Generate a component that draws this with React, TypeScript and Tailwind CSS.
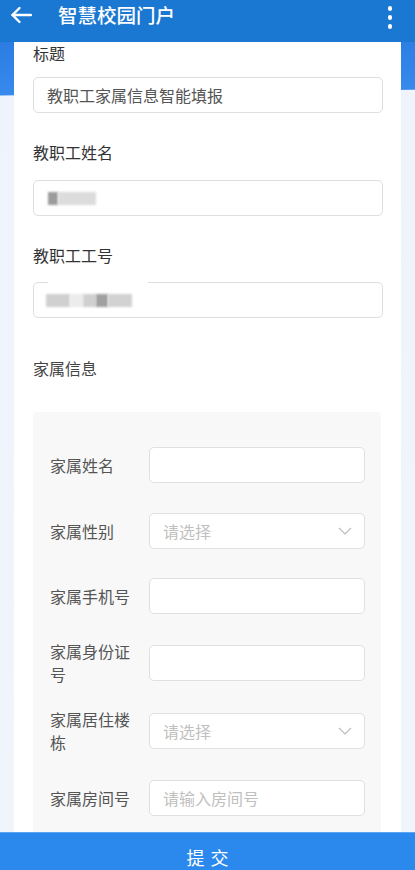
import React from "react";

const font = "font-['Noto_Sans_CJK_SC','Noto_Sans',sans-serif]";

function Chevron() {
  return (
    <svg width="14" height="8" viewBox="0 0 14 8" fill="none">
      <polyline points="1,1 7,7 13,1" stroke="#bdbdbd" strokeWidth="1.2" fill="none" />
    </svg>
  );
}

type Row = {
  label: string;
  mt: string;
  kind: "input" | "select";
  placeholder?: string;
};

const rows: Row[] = [
  { label: "家属姓名", mt: "mt-0", kind: "input" },
  { label: "家属性别", mt: "mt-[30px]", kind: "select", placeholder: "请选择" },
  { label: "家属手机号", mt: "mt-[29px]", kind: "input" },
  { label: "家属身份证号", mt: "mt-[31px]", kind: "input" },
  { label: "家属居住楼栋", mt: "mt-[32px]", kind: "select", placeholder: "请选择" },
  { label: "家属房间号", mt: "mt-[31px]", kind: "input", placeholder: "请输入房间号" },
];

export default function App() {
  return (
    <div className={`w-[415px] h-[870px] overflow-hidden flex flex-col ${font}`}>
      {/* Header */}
      <div className="h-[42px] shrink-0 bg-[#1a77d2] flex items-start pt-[5px]">
        <div className="ml-[10px] mt-[1px]">
          <svg width="22" height="18" viewBox="0 0 22 18" fill="none">
            <line x1="2.5" y1="9" x2="21" y2="9" stroke="white" strokeWidth="2.4" strokeLinecap="round" />
            <polyline points="9.5,2 2.5,9 9.5,16" stroke="white" strokeWidth="2.4" strokeLinecap="round" strokeLinejoin="round" fill="none" />
          </svg>
        </div>
        <div className="ml-[26px] text-white text-[19.5px] leading-[19px] font-medium">智慧校园门户</div>
        <div className="ml-auto mr-[23px] flex flex-col gap-[4.5px] pt-[1px]">
          <div className="w-[4.5px] h-[4.5px] rounded-full bg-white" />
          <div className="w-[4.5px] h-[4.5px] rounded-full bg-white" />
          <div className="w-[4.5px] h-[4.5px] rounded-full bg-white" />
        </div>
      </div>

      {/* Main */}
      <div className="flex-1 min-h-0 overflow-hidden px-[14px] bg-[linear-gradient(179.2deg,#2b7de3_0px,#3889ec_53px,#eff3fb_54px,#f0f4fb_100%)]">
        <div className="h-full bg-white pl-[19px] pr-[18px]">
          <div className="text-[16px] leading-[23px] text-[#333]">标题</div>
          <div className="mt-[12px] h-[36px] rounded-[5px] border border-[#dedede] flex items-center pl-[13px] text-[16px] text-[#555]">
            教职工家属信息智能填报
          </div>

          <div className="mt-[27px] text-[16px] leading-[24px] text-[#333]">教职工姓名</div>
          <div className="mt-[16px] h-[36px] rounded-[5px] border border-[#dedede] flex items-center pl-[14px]">
            <div className="w-[10px] h-[13px] bg-[#9c9c9c] blur-[1px]" />
            <div className="w-[38px] h-[13px] bg-[#dcdcdc] blur-[1px]" />
          </div>

          <div className="mt-[27px] text-[16px] leading-[24px] text-[#333]">教职工工号</div>
          <div className="mt-[15px] h-[36px] rounded-[5px] border border-[#dedede] flex items-center pl-[12px] relative">
            <div className="absolute left-[14px] top-[-2px] w-[100px] h-[4px] bg-white" />
            <div className="w-[24px] h-[13px] bg-[#d0d0d0] blur-[1px]" />
            <div className="w-[13px] h-[13px] bg-[#ececec] blur-[1px]" />
            <div className="w-[13px] h-[13px] bg-[#d0d0d0] blur-[1px]" />
            <div className="w-[12px] h-[13px] bg-[#a0a0a0] blur-[1px]" />
            <div className="w-[24px] h-[13px] bg-[#d2d2d2] blur-[1px]" />
          </div>

          <div className="mt-[38px] text-[16px] leading-[24px] text-[#444]">家属信息</div>

          <div className="mt-[32px] mr-[2px] bg-[#f8f8f8] rounded-[4px] pt-[35px] pl-[17px] pr-[16px] pb-[30px]">
            {rows.map((r) => (
              <div key={r.label} className={`${r.mt} h-[36px] flex items-center`}>
                <div className="w-[88px] shrink-0 text-[16px] leading-[23px] text-[#555]">{r.label}</div>
                <div className="ml-[11px] flex-1 h-[36px] rounded-[5px] border border-[#e0e0e0] bg-white flex items-center pl-[13px] pr-[12px]">
                  <span className="text-[16px] text-[#c0c0c0]">{r.placeholder ?? ""}</span>
                  {r.kind === "select" && (
                    <span className="ml-auto">
                      <Chevron />
                    </span>
                  )}
                </div>
              </div>
            ))}
          </div>
        </div>
      </div>

      {/* Submit */}
      <div className="h-[38px] shrink-0 bg-[#2b89ee] border-t border-[#5aa6f5] flex justify-center pt-[13px]">
        <span className="text-white text-[18px] leading-[22px] tracking-[6px] pl-[6px]">提交</span>
      </div>
    </div>
  );
}
